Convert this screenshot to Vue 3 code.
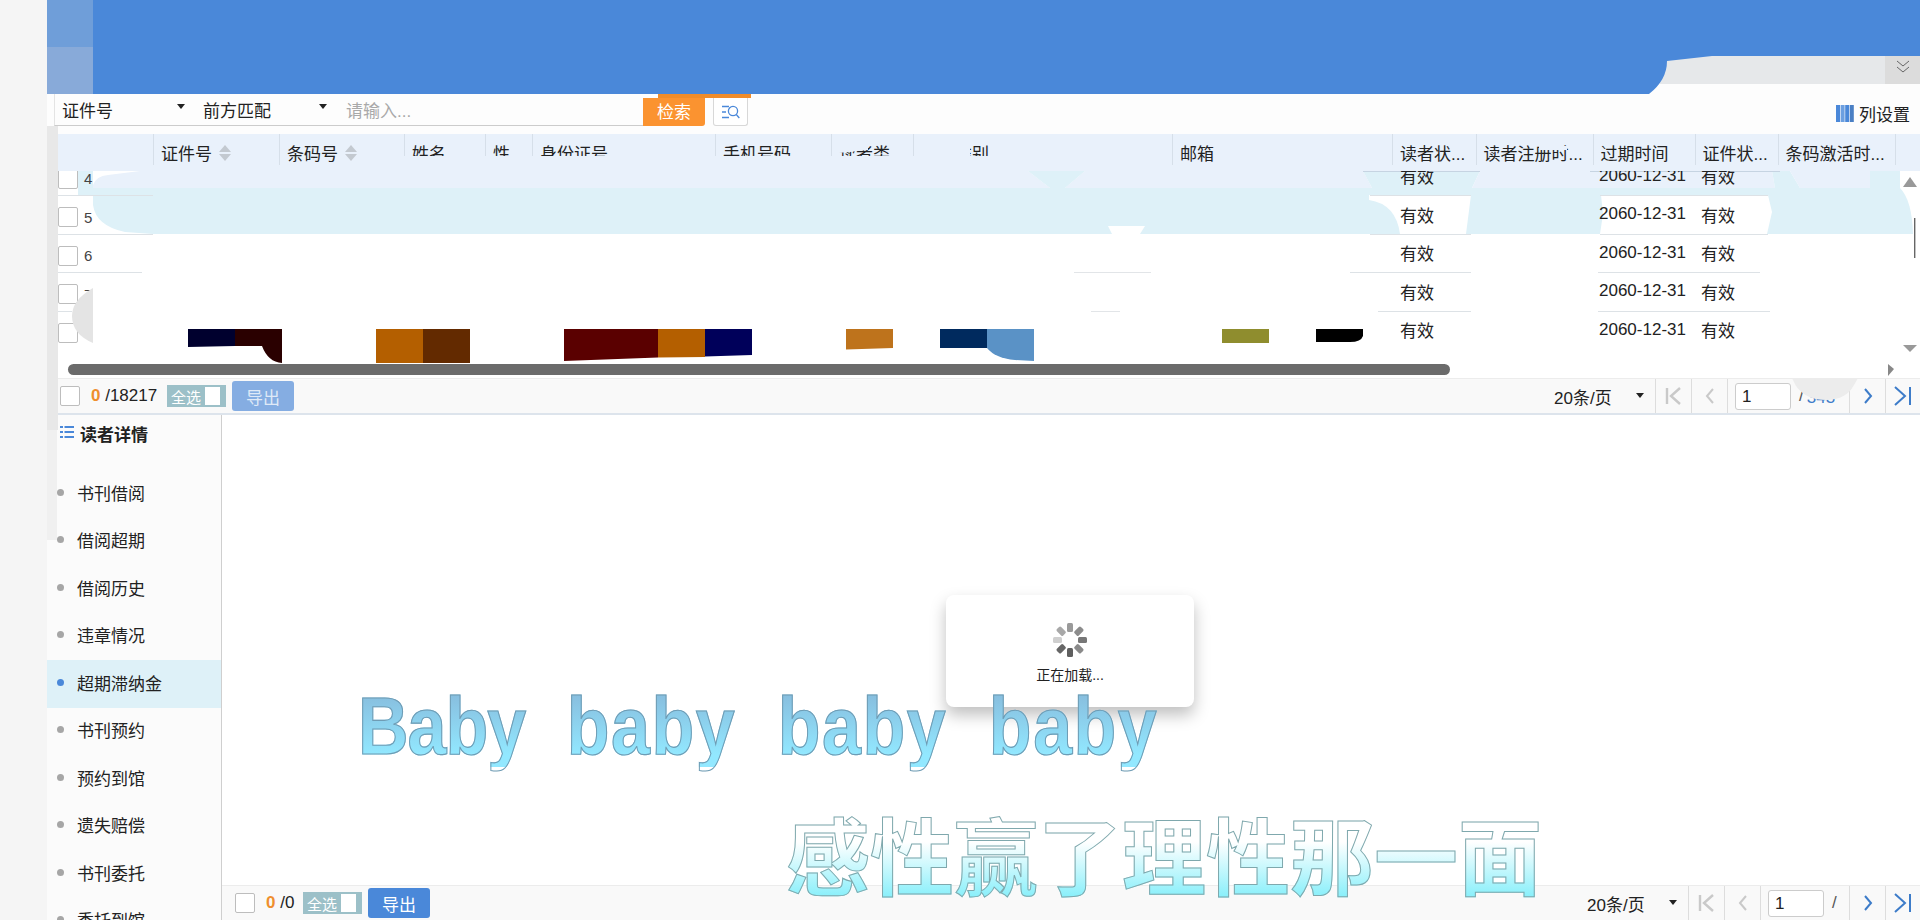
<script setup>
const cols = [
  { t: '', w: 106 }, { t: '证件号', w: 126, sort: true }, { t: '条码号', w: 125, sort: true },
  { t: '姓名', w: 81 }, { t: '性', w: 47 }, { t: '身份证号', w: 183 }, { t: '手机号码', w: 116 },
  { t: '读者类', w: 82 }, { t: '读者类别', w: 259 }, { t: '邮箱', w: 220 }, { t: '读者状...', w: 83.5 },
  { t: '读者注册时...', w: 117 }, { t: '过期时间', w: 102 }, { t: '证件状...', w: 83 },
  { t: '条码激活时...', w: 117 }, { t: '', w: 26 }
]
const rows = [4, 5, 6, 7, 8]
const nav = ['书刊借阅', '借阅超期', '借阅历史', '违章情况', '超期滞纳金', '书刊预约', '预约到馆', '遗失赔偿', '书刊委托', '委托到馆']
const petals = [
  { a: 0, c: '#9a9a9a' }, { a: 45, c: '#8c8c8c' }, { a: 90, c: '#777777' }, { a: 135, c: '#8a8a8a' },
  { a: 180, c: '#5f5f5f' }, { a: 225, c: '#666666' }, { a: 270, c: '#cfcfcf' }, { a: 315, c: '#a8a8a8' }
]
const lines = [
  [171, 1363, 1480, '#c6d4e2'], [171, 1590, 1780, '#c6d4e2'],
  [195, 58, 153, '#dde2e6'], [195, 1370, 1471, '#dde2e6'], [195, 1600, 1768, '#dde2e6'],
  [234, 57, 153, '#dde2e6'], [234, 1370, 1471, '#dde2e6'], [234, 1600, 1768, '#dde2e6'],
  [272, 57, 142, '#dde2e6'], [272, 1074, 1151, '#e2e5e8'], [272, 1350, 1471, '#dde2e6'], [272, 1598, 1760, '#dde2e6'],
  [311, 57, 72, '#dde2e6'], [311, 1091, 1120, '#e2e5e8'], [311, 1378, 1471, '#dde2e6'], [311, 1598, 1770, '#dde2e6'],
  [349, 60, 262, '#dde2e6'], [349, 893, 940, '#dde2e6'], [349, 1099, 1487, '#dde2e6'], [349, 1592, 1790, '#dde2e6'], [349, 1860, 1895, '#dde2e6']
]
</script>

<template>
  <div class="page">
    <aside class="gutter"></aside>
    <main class="main">
      <header class="banner">
        <svg width="1873" height="94" viewBox="47 0 1873 94">
          <rect x="47" y="0" width="46" height="47" fill="#6f9ed9" />
          <rect x="47" y="47" width="46" height="47" fill="#88aad9" />
          <rect x="1660" y="56" width="260" height="28" fill="#e6e8ea" />
          <rect x="1885" y="56" width="35" height="28" fill="#dcdcdc" />
          <path d="M93 0H1920V56H1712L1667 61Q1667 80 1649 94H93Z" fill="#4a88d9" />
          <path d="M1897 61l6 5 6-5M1897 67l6 5 6-5" fill="none" stroke="#666" stroke-width="1" />
        </svg>
      </header>

      <section class="toolbar">
        <div class="search">
          <span class="sel sel-a">证件号<i class="caret"></i></span>
          <span class="sel sel-b">前方匹配<i class="caret"></i></span>
          <span class="placeholder">请输入...</span>
        </div>
        <button class="btn-search">检索</button>
        <button class="btn-adv">
          <svg width="20" height="16" viewBox="0 0 20 16" fill="none" stroke="#4a88d9" stroke-width="1.3">
            <path d="M1 2.5h7M1 8h4M1 13.5h7" />
            <circle cx="12" cy="7" r="4.6" />
            <path d="M15.3 10.5l3 3.5" />
          </svg>
        </button>
        <div class="colset">
          <svg width="18" height="17" viewBox="0 0 18 17">
            <rect x="0" width="4" height="17" fill="#4a88d9" />
            <rect x="4.6" width="4" height="17" fill="#6c9fe0" />
            <rect x="9.2" width="4" height="17" fill="#4a88d9" />
            <rect x="13.8" width="4" height="17" fill="#4a7fc4" />
          </svg>
          <span>列设置</span>
        </div>
      </section>

      <div class="thead">
        <div v-for="(c, i) in cols" :key="i" class="th" :style="{ width: c.w + 'px' }">
          <span>{{ c.t }}</span>
          <span v-if="c.sort" class="sort"><i class="up"></i><i class="down"></i></span>
        </div>
      </div>

      <div class="tbody">
        <svg class="under" width="1873" height="178" viewBox="47 171 1873 178">
          <path d="M78 171H1920V234H78Z" fill="#fff" />
          <rect x="78" y="171" width="15" height="24" fill="#def1f8" />
          <path d="M93 185Q96 176 108 175L140 171H1028L1050 188H1065L1085 171H1363L1372 188H93Z" fill="#e9f1fb" />
          <path d="M1028 171H1085L1065 188H1050Z" fill="#def1f8" />
          <path d="M1363 171H1480L1472 188H1372Z" fill="#def1f8" />
          <path d="M1480 171H1772L1775 188H1472Z" fill="#e9f1fb" />
          <path d="M1772 171H1790L1800 188H1775Z" fill="#def1f8" />
          <path d="M1790 171H1870V188H1800Z" fill="#e9f1fb" />
          <path d="M1870 171H1900V188H1870Z" fill="#def1f8" />
          <path d="M93 188H1900Q1912 200 1913 234H153L125 232Q96 226 93 205Z" fill="#def1f8" />
          <path d="M1369 195H1471L1466 234H1400Q1396 204 1369 200Z" fill="#fff" />
          <path d="M1601 195H1768L1772 212L1767 234H1600L1603 214Z" fill="#fff" />
          <path d="M1108 226H1145L1140 234H1112Z" fill="#fff" />
          <rect v-for="(l, i) in lines" :key="i" :x="l[1]" :y="l[0]" :width="l[2] - l[1]" height="1" :fill="l[3]" />
        </svg>
        <div class="rows">
          <div v-for="n in rows" :key="n" class="row">
            <div class="c-first"><i class="check"></i><span class="num">{{ n }}</span></div>
            <div class="c-state">有效</div>
            <div class="c-date">2060-12-31</div>
            <div class="c-card">有效</div>
          </div>
        </div>
      </div>

      <div class="hscroll"><div class="thumb"></div></div>

      <div class="pager pager-top">
        <div class="pager-left">
          <i class="check"></i>
          <span class="count"><b>0</b> /18217</span>
          <span class="all">全选<i></i></span>
          <button class="export export-off">导出</button>
        </div>
        <div class="pager-right">
          <span class="size">20条/页<i class="caret"></i></span>
          <span class="pg"><svg width="22" height="20" viewBox="0 0 22 20" fill="none" stroke="#c9c9c9" stroke-width="2.4"><path d="M4 2v16M17 2L8 10l9 8" /></svg></span>
          <span class="pg"><svg width="14" height="20" viewBox="0 0 14 20" fill="none" stroke="#c9c9c9" stroke-width="2"><path d="M10 3L4 10l6 7" /></svg></span>
          <span class="pg pg-input"><span class="input">1</span><span class="slash">/</span><span class="total">343</span></span>
          <span class="pg"><svg width="14" height="20" viewBox="0 0 14 20" fill="none" stroke="#3d7cc9" stroke-width="2"><path d="M4 3l6 7-6 7" /></svg></span>
          <span class="pg"><svg width="22" height="22" viewBox="0 0 22 22" fill="none" stroke="#3d7cc9" stroke-width="2"><path d="M3 2l10 9-10 9M18 2v18" /></svg></span>
        </div>
      </div>

      <section class="lower">
        <nav class="nav">
          <div class="nav-head">
            <svg width="14" height="12" viewBox="0 0 14 12" fill="#4a88d9">
              <rect x="0" y="0" width="3" height="2" /><rect x="4.5" y="0" width="9.5" height="2" />
              <rect x="0" y="5" width="3" height="2" /><rect x="4.5" y="5" width="9.5" height="2" />
              <rect x="0" y="10" width="3" height="2" /><rect x="4.5" y="10" width="9.5" height="2" />
            </svg>
            <span>读者详情</span>
          </div>
          <div v-for="(n, i) in nav" :key="n" class="nav-item" :class="{ active: i === 4 }">
            <i class="dot"></i><span>{{ n }}</span>
          </div>
        </nav>
        <div class="content">
          <div class="content-body">
            <div class="loading">
              <svg width="36" height="36" viewBox="-18 -18 36 36">
                <rect v-for="p in petals" :key="p.a" x="-3" y="-17" width="6" height="9" rx="1.5" :fill="p.c" :transform="'rotate(' + p.a + ')'" />
              </svg>
              <span>正在加载...</span>
            </div>
          </div>
          <div class="pager pager-bottom">
            <div class="pager-left">
              <i class="check"></i>
              <span class="count"><b>0</b> /0</span>
              <span class="all">全选<i></i></span>
              <button class="export">导出</button>
            </div>
            <div class="pager-right">
              <span class="size">20条/页<i class="caret"></i></span>
              <span class="pg"><svg width="22" height="20" viewBox="0 0 22 20" fill="none" stroke="#c9c9c9" stroke-width="2.4"><path d="M4 2v16M17 2L8 10l9 8" /></svg></span>
              <span class="pg"><svg width="14" height="20" viewBox="0 0 14 20" fill="none" stroke="#c9c9c9" stroke-width="2"><path d="M10 3L4 10l6 7" /></svg></span>
              <span class="pg pg-input"><span class="input">1</span><span class="slash">/</span></span>
              <span class="pg"><svg width="14" height="20" viewBox="0 0 14 20" fill="none" stroke="#3d7cc9" stroke-width="2"><path d="M4 3l6 7-6 7" /></svg></span>
              <span class="pg"><svg width="22" height="22" viewBox="0 0 22 22" fill="none" stroke="#3d7cc9" stroke-width="2"><path d="M3 2l10 9-10 9M18 2v18" /></svg></span>
            </div>
          </div>
        </div>
      </section>
    </main>

    <svg class="over" width="1920" height="920" viewBox="0 0 1920 920">
      <rect x="47" y="126" width="11" height="304" fill="#e8e8e8" />
      <rect x="47" y="430" width="10" height="110" fill="#f0f0f0" />
      <!-- cover over header labels -->
      <path d="M403 156H1172V171H403Z" fill="#e9f1fb" />
      <path d="M838 134H868V150L838 153Z" fill="#e9f1fb" />
      <rect x="918" y="142" width="52" height="10" fill="#e9f1fb" />
      <rect x="920" y="152" width="50" height="12" fill="#e9f1fb" />
      <rect x="1539" y="146" width="28" height="4" fill="#e9f1fb" />
      <!-- blob at row numbers -->
      <rect x="93" y="280" width="95" height="69" fill="#fff" />
      <path d="M93 288Q72 300 72 316Q72 334 93 343Z" fill="#e4e4e4" />
      <!-- coloured blocks -->
      <path d="M188 329H235V346L188 347Z" fill="#00002e" />
      <path d="M235 329H282V363Q268 362 262 346L235 346Z" fill="#2a0000" />
      <rect x="376" y="329" width="47" height="34" fill="#b45f00" />
      <rect x="423" y="329" width="47" height="34" fill="#632a00" />
      <path d="M564 329H658V357.5L564 361Z" fill="#5a0000" />
      <path d="M658 329H705V357L658 357.5Z" fill="#b45f00" />
      <path d="M705 329H752V355L705 356.5Z" fill="#00005a" />
      <path d="M846 329H893V348L846 349.5Z" fill="#be731c" />
      <rect x="940" y="329" width="47" height="19" fill="#002a5e" />
      <path d="M987 329H1034V361L1015 360Q995 358 987 348Z" fill="#5a92c6" />
      <rect x="1222" y="329" width="47" height="14" fill="#8f8d2e" />
      <path d="M1316 329H1363V336Q1361 342 1350 342H1316Z" fill="#000" />
      <!-- scroll arrows -->
      <path d="M1903 187L1910 177L1917 187Z" fill="#999" />
      <path d="M1903 345L1910 352L1917 345Z" fill="#999" />
      <rect x="1914" y="218" width="1.4" height="40" fill="#666" />
      <path d="M1888 364L1894 369L1888 376Z" fill="#888" />
      <!-- blob over pager -->
      <path d="M1790 349H1858V378H1790Z" fill="#fff" />
      <path d="M1792 378H1858L1854 385Q1846 400 1826 400Q1806 400 1796 386Z" fill="#ececec" />
    </svg>

    <div class="sub sub-en"><span class="cap-word">Baby</span> baby baby baby</div>
    <div class="sub sub-zh">感性赢了理性那一面</div>
  </div>
</template>

<style>
html, body { margin: 0; padding: 0; background: #fff; }
</style>

<style scoped>
.page {
  position: relative;
  display: flex;
  width: 1920px;
  height: 920px;
  overflow: hidden;
  background: #fff;
  font-family: "Liberation Sans", "Noto Sans CJK SC", sans-serif;
  font-size: 17px;
  color: #222;
}
i { display: block; font-style: normal; }
button { font-family: inherit; border: 0; padding: 0; }
.gutter { width: 47px; flex: none; background: #f5f5f5; }
.main { width: 1873px; display: flex; flex-direction: column; }
.banner { height: 94px; flex: none; background: #fdfdfd; }
.banner svg { display: block; }

.toolbar {
  position: relative;
  height: 40px;
  flex: none;
  display: flex;
  align-items: flex-start;
  padding-left: 7px;
  background: #fdfdfd;
  box-sizing: border-box;
}
.search {
  width: 589px;
  height: 32px;
  display: flex;
  align-items: center;
  border-bottom: 1px solid #ccc;
  border-left: 1px solid #e4e4e4;
  box-sizing: border-box;
  padding-top: 0;
}
.sel { display: flex; align-items: center; position: relative; color: #222; }
.sel-a { width: 148px; padding-left: 7px; box-sizing: border-box; }
.sel-b { width: 143px; }
.caret {
  position: absolute;
  right: 18px;
  top: 7px;
  border: 4px solid transparent;
  border-top: 5px solid #222;
  border-bottom: 0;
}
.sel-b .caret { right: 19px; }
.placeholder { color: #a9a9a9; }
.btn-search {
  position: relative;
  width: 62px;
  height: 28px;
  margin-top: 4px;
  padding-bottom: 5px;
  background: #fb9330;
  color: #fff;
  font-size: 17px;
  border-radius: 0 0 3px 0;
}
.btn-search::before {
  content: "";
  position: absolute;
  left: 15px;
  top: -4px;
  width: 93px;
  height: 4px;
  background: #f08c2a;
}
.btn-adv {
  width: 35px;
  height: 28px;
  margin: 4px 0 0 8px;
  background: #fff;
  border: 1px solid #d8d8d8;
  border-top: 0;
  border-radius: 0 0 3px 3px;
  display: flex;
  align-items: center;
  justify-content: center;
}
.colset {
  display: flex;
  align-items: center;
  gap: 5px;
  margin-left: auto;
  margin-top: 7px;
  margin-right: 10px;
}
.colset svg { display: block; }

.thead {
  position: relative;
  height: 37px;
  flex: none;
  display: flex;
  background: #e9f1fb;
}
.th {
  height: 31px;
  flex: none;
  display: flex;
  align-items: center;
  gap: 7px;
  padding: 6px 0 0 7px;
  box-sizing: border-box;
  border-left: 1px solid #d6dfe9;
  white-space: nowrap;
}
.th:first-child { border-left: 0; }
.sort { display: flex; flex-direction: column; gap: 2px; }
.up { border: 6px solid transparent; border-top: 0; border-bottom: 7px solid #c3c9d0; }
.down { border: 6px solid transparent; border-bottom: 0; border-top: 7px solid #c3c9d0; }

.tbody { position: relative; height: 178px; flex: none; overflow: hidden; }
.under { position: absolute; left: 0; top: 0; display: block; }
.rows { position: relative; margin-top: -14.5px; }
.row { height: 38.5px; display: flex; align-items: center; }
.c-first { width: 345px; display: flex; align-items: center; padding: 6px 0 0 11px; box-sizing: border-box; flex: none; }
.num { margin-left: 6px; font-size: 15px; color: #444; }
.c-state { margin-left: 1008px; width: 199px; flex: none; }
.c-date { width: 102px; flex: none; }
.c-card { flex: none; }
.check { width: 20px; height: 20px; box-sizing: border-box; border: 1px solid #bdbdbd; border-radius: 2px; background: #fff; flex: none; }

.hscroll { height: 29px; flex: none; background: #fff; position: relative; }
.thumb { position: relative; top: 15px; margin-left: 21px; width: 1382px; height: 11px; border-radius: 6px; background: #6b6b6b; }

.pager { display: flex; justify-content: space-between; align-items: center; background: #f9f9f9; box-sizing: border-box; flex: none; }
.pager-top { height: 37px; padding-left: 13px; border-top: 1px solid #ececec; border-bottom: 2px solid #dde4ec; }
.pager-bottom { height: 35px; padding-left: 13px; border-top: 1px solid #ececec; }
.pager-left { display: flex; align-items: center; }
.count { margin-left: 11px; width: 76px; white-space: nowrap; }
.pager-bottom .count { width: 37px; }
.count b { color: #ef8f2e; }
.all {
  width: 59px;
  height: 22px;
  background: #9cc0c8;
  color: #fff;
  font-size: 15px;
  display: flex;
  align-items: center;
  padding-left: 4px;
  gap: 4px;
  box-sizing: border-box;
  white-space: nowrap;
}
.all i { width: 15px; height: 18px; background: #fff; }
.export {
  width: 62px;
  height: 30px;
  margin-left: 6px;
  background: #4a88d9;
  color: #fff;
  font-size: 17px;
  border-radius: 3px;
}
.export-off { background: #85ade2; color: #dfe9f7; }
.pager-right { display: flex; align-items: stretch; height: 100%; }
.size { position: relative; width: 101px; display: flex; align-items: center; white-space: nowrap; }
.size .caret { right: 11px; top: 50%; margin-top: -3px; }
.pg { width: 36px; display: flex; align-items: center; justify-content: center; border-left: 1px solid #ddd; box-sizing: border-box; }
.pg:last-child { width: 35px; }
.pg-input { width: 122px; justify-content: flex-start; padding-left: 7px; }
.pager-bottom .pg-input { width: 89px; }
.input {
  width: 56px;
  height: 27px;
  line-height: 25px;
  box-sizing: border-box;
  border: 1px solid #ccc;
  border-radius: 3px;
  background: #fff;
  padding-left: 6px;
  flex: none;
}
.slash { margin-left: 8px; color: #555; }
.total { margin-left: 3px; color: #3d7cc9; font-size: 17px; position: relative; top: 2px; }

.lower { flex: 1; min-height: 0; display: flex; }
.nav {
  width: 175px;
  flex: none;
  background: #fbfbfb;
  border-right: 1px solid #cfcfcf;
  box-sizing: border-box;
  overflow: hidden;
}
.nav-head { height: 55px; box-sizing: border-box; padding: 6px 0 0 13px; display: flex; align-items: flex-start; gap: 6px; font-weight: 700; }
.nav-head svg { margin-top: 5px; flex: none; }
.nav-item { height: 47.5px; display: flex; align-items: center; padding: 0 0 3px 10px; box-sizing: border-box; gap: 13px; flex: none; }
.nav-item.active { background: #def1f8; }
.dot { width: 7px; height: 7px; border-radius: 50%; background: #a6a6a6; flex: none; }
.active .dot { background: #4a88d9; }
.content { flex: 1; min-width: 0; display: flex; flex-direction: column; }
.content-body { flex: 1; position: relative; background: #fff; }
.loading {
  position: absolute;
  left: 724px;
  top: 180px;
  width: 248px;
  height: 112px;
  border-radius: 8px;
  background: #fff;
  box-shadow: 0 8px 16px rgba(0, 0, 0, .25);
  display: flex;
  flex-direction: column;
  align-items: center;
  padding-top: 27px;
  box-sizing: border-box;
  font-size: 14px;
  gap: 6px;
}
.loading svg { display: block; }

.over { position: absolute; left: 0; top: 0; pointer-events: none; }
.sub {
  position: absolute;
  white-space: nowrap;
  background-clip: text;
  -webkit-background-clip: text;
  color: transparent;
  -webkit-text-fill-color: transparent;
}
.sub-en {
  left: 358px;
  top: 686px;
  font: 700 70px/70px "Liberation Sans", sans-serif;
  letter-spacing: 1.5px;
  word-spacing: 20.7px;
  transform: scaleY(1.157);
  transform-origin: left top;
  background-image: linear-gradient(to bottom, #86b8da, #92e8ff 85%);
  -webkit-text-stroke: 1px #6f9cb4;
}
.cap-word { letter-spacing: -1px; }
.sub-zh {
  left: 786px;
  top: 800px;
  font: 700 84px/120px "Liberation Sans", "Noto Sans CJK SC", sans-serif;
  background-image: linear-gradient(to bottom, #ffffff 35%, #7eeefa 85%);
  -webkit-text-stroke: 1px #7fa8ad;
}
</style>
